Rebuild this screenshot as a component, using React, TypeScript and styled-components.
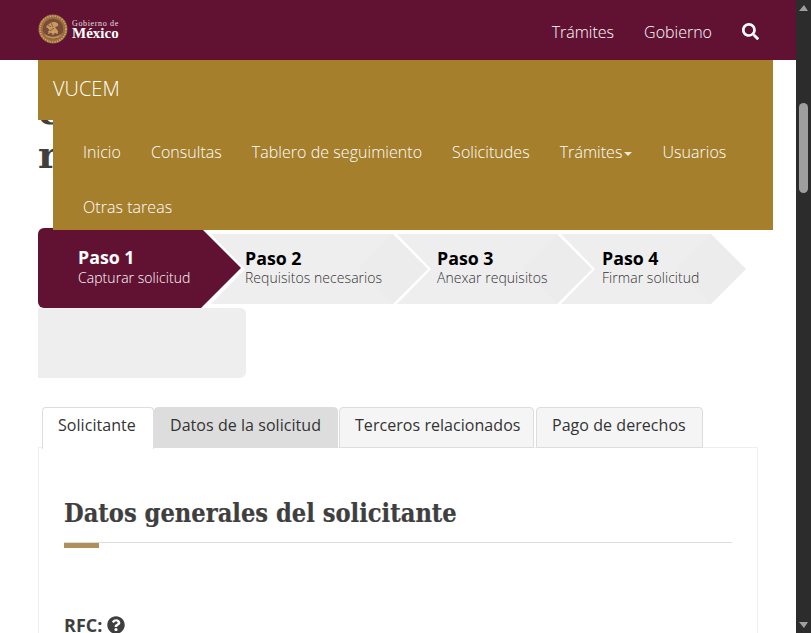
import React from "react";
import styled, { createGlobalStyle } from "styled-components";
import { FaSearch, FaQuestionCircle } from "react-icons/fa";

const Global = createGlobalStyle`
  html, body { margin: 0; padding: 0; background: #fff; overflow: hidden; }
  * { box-sizing: border-box; }
`;

const Shell = styled.div`
  display: flex;
  width: 811px;
  height: 633px;
  overflow: hidden;
  font-family: "Open Sans", "Noto Sans", sans-serif;
  color: #333;
`;
const Page = styled.div`
  width: 796px;
  flex: none;
  display: flex;
  flex-direction: column;
`;
const Scrollbar = styled.div`
  position: relative;
  flex: 1;
  background: #2c2c2c;
`;
const ScrollUp = styled.div`
  position: absolute;
  left: 3px;
  top: 5px;
  border-left: 5px solid transparent;
  border-right: 4px solid transparent;
  border-bottom: 6px solid #9e9e9e;
`;
const ScrollDown = styled.div`
  position: absolute;
  left: 3px;
  bottom: 5px;
  border-left: 5px solid transparent;
  border-right: 4px solid transparent;
  border-top: 6px solid #9e9e9e;
`;
const ScrollThumb = styled.div`
  position: absolute;
  left: 3px;
  top: 103px;
  width: 9px;
  height: 90px;
  border-radius: 5px;
  background: #9e9e9e;
`;

const TopBar = styled.header`
  height: 60px;
  flex: none;
  background: #611232;
  display: flex;
  align-items: center;
  padding: 0 37px 0 38px;
  color: #fff;
`;
const Logo = styled.div`
  display: flex;
  align-items: center;
  gap: 4px;
  margin-top: -2px;
`;
const LogoWords = styled.div`
  display: flex;
  flex-direction: column;
  font-family: "Liberation Serif", serif;
  color: #fff;
`;
const LogoSmall = styled.span`
  font-size: 8px;
  line-height: 8px;
  letter-spacing: 0.65px;
  opacity: 0.85;
`;
const LogoBig = styled.span`
  font-size: 15px;
  line-height: 10px;
  font-weight: 700;
`;
const TopLinks = styled.nav`
  margin-left: auto;
  display: flex;
  align-items: center;
`;
const TopLink = styled.a`
  font-size: 16px;
  line-height: 20px;
  margin-top: 4px;
  margin-right: 30px;
  color: #fff;
  font-weight: 300;
`;
const SearchIcon = styled(FaSearch)`
  width: 17px;
  height: 17px;
  margin-top: 2px;
  color: #fff;
`;

const Band = styled.div`
  position: relative;
  margin: 0 23px 0 38px;
  height: 170px;
  flex: none;
`;
const HiddenTitle = styled.h1`
  position: absolute;
  left: 0;
  top: 29px;
  margin: 0;
  font-family: "DejaVu Serif", serif;
  font-weight: 700;
  font-size: 38px;
  line-height: 44px;
  color: #3f3f3f;
`;
const Brand = styled.div`
  position: relative;
  height: 60px;
  background: #a57f2c;
  color: #fff;
  padding-left: 15px;
  font-size: 20px;
  font-weight: 300;
  line-height: 58px;
`;
const Menu = styled.ul`
  position: relative;
  z-index: 2;
  margin: 0 0 0 15px;
  padding: 5px 0 0 15px;
  height: 110px;
  list-style: none;
  background: #a57f2c;
  display: flex;
  flex-wrap: wrap;
  align-content: flex-start;
`;
const MenuItem = styled.li`
  padding: 0 15px;
  line-height: 55px;
  font-size: 16px;
  font-weight: 300;
  letter-spacing: 0.04px;
  color: #fff;
  display: flex;
  align-items: center;
`;
const Caret = styled.span`
  display: inline-block;
  margin-left: 2px;
  margin-top: 2px;
  border-top: 4px solid #f2ead8;
  border-left: 4px solid transparent;
  border-right: 4px solid transparent;
`;

const Steps = styled.ol`
  list-style: none;
  margin: -2px 0 0 38px;
  padding: 0;
  display: flex;
  align-items: center;
  height: 80px;
  flex: none;
`;
const Step = styled.li<{ $w: number; $ml: number; $pad: number; $active?: boolean }>`
  position: relative;
  flex: none;
  width: ${(p) => p.$w}px;
  height: ${(p) => (p.$active ? 80 : 70)}px;
  margin-left: ${(p) => p.$ml}px;
  margin-top: ${(p) => (p.$active ? 0 : 2)}px;
  padding: ${(p) => (p.$active ? "0 0 3px" : "0 0 4px")} ${(p) => p.$pad}px;
  display: flex;
  flex-direction: column;
  justify-content: center;
  background: ${(p) => (p.$active ? "#611232" : "#eeeeee")};
  color: ${(p) => (p.$active ? "#fff" : "#333")};
  border-radius: ${(p) => (p.$active ? "6px 0 0 6px" : "0")};
  z-index: ${(p) => (p.$active ? 1 : 0)};
  clip-path: ${(p) =>
    p.$active
      ? `polygon(0 0, ${p.$w - 40}px 0, ${p.$w}px 40px, ${p.$w - 40}px 80px, 0 80px)`
      : `polygon(0 0, ${p.$w - 35}px 0, ${p.$w}px 35px, ${p.$w - 35}px 70px, 0 70px, 34px 35px)`};
  &::after {
    content: "";
    display: ${(p) => (p.$active ? "none" : "block")};
    position: absolute;
    right: 0;
    top: 0;
    width: 70px;
    height: 70px;
    background: #ececec;
    clip-path: polygon(35px 0, 70px 35px, 35px 70px, 0 35px);
  }
`;
const StepTitle = styled.strong<{ $active?: boolean }>`
  position: relative;
  z-index: 1;
  font-size: 17.8px;
  line-height: 22px;
  font-weight: 700;
  color: ${(p) => (p.$active ? "#fff" : "#000")};
  margin-bottom: ${(p) => (p.$active ? 1 : 0)}px;
`;
const StepSub = styled.span`
  position: relative;
  z-index: 1;
  font-size: 14px;
  font-weight: 300;
  letter-spacing: 0.05px;
  line-height: 18px;
`;
const StepOverflow = styled.div`
  flex: none;
  width: 208px;
  height: 70px;
  margin-left: 38px;
  background: #eeeeee;
  border-radius: 0 6px 6px 0;
`;

const Tabs = styled.div`
  display: flex;
  flex: none;
  margin: 29px 0 0 42px;
  height: 41px;
`;
const Tab = styled.div<{ $w: number; $ml?: number; $state: "on" | "hover" | "off" }>`
  flex: none;
  position: relative;
  z-index: 1;
  width: ${(p) => p.$w}px;
  margin-left: ${(p) => p.$ml ?? 0}px;
  padding-left: 15px;
  font-size: 16px;
  letter-spacing: 0.05px;
  line-height: 34px;
  color: #333;
  border: 1px solid #ddd;
  border-bottom: ${(p) => (p.$state === "on" ? "none" : "1px solid #ddd")};
  border-radius: 4px 4px 0 0;
  height: ${(p) => (p.$state === "on" ? 42 : 41)}px;
  background: ${(p) =>
    p.$state === "on" ? "#fff" : p.$state === "hover" ? "#dddddd" : "#f5f5f5"};
`;
const Panel = styled.section`
  flex: 1;
  margin: -1px 38px 0 38px;
  padding: 0 25px;
  border: 1px solid #eee;
  border-bottom: none;
  width: 720px;
`;
const Heading = styled.h2`
  margin: 47px 0 0;
  font-family: "DejaVu Serif Condensed", "DejaVu Serif", serif;
  font-stretch: condensed;
  font-weight: 700;
  font-size: 25.2px;
  line-height: 36px;
  color: #3f3f3f;
  -webkit-text-stroke: 0.2px #3f3f3f;
`;
const Rule = styled.div`
  position: relative;
  height: 1px;
  margin-top: 11px;
  background: #ddd;
  &::after {
    content: "";
    position: absolute;
    left: 0;
    top: 1px;
    width: 35px;
    height: 5px;
    background: #b08f5c;
  }
`;
const Field = styled.div`
  margin-top: 72px;
  display: flex;
  align-items: center;
  gap: 5px;
  font-size: 18px;
  font-weight: 700;
  line-height: 20px;
  color: #3f3f3f;
`;

const Emblem = () => (
  <svg width="30" height="30" viewBox="0 0 30 30" aria-hidden="true">
    <circle cx="15" cy="15" r="14.5" fill="#9a6f3e" />
    <circle cx="15" cy="15" r="13" fill="none" stroke="#cfa56a" strokeWidth="1.6" strokeDasharray="1.4 1.1" />
    <circle cx="15" cy="15" r="10.3" fill="#7b4a3a" />
    <path d="M8 13c2-3 5-5 8-5 3 0 5 2 4 4l-3 1c1 2 3 3 3 5-3 2-6 2-9 0 1-2 0-3-3-5z" fill="#c79a5e" />
    <path d="M10 11l3 2M13 9l2 4M16 14l-4 3" stroke="#7b4a3a" strokeWidth="0.8" fill="none" />
    <path d="M11 20v-3M15 21v-4M19 20v-3" stroke="#d2a86c" strokeWidth="1.2" />
    <path d="M6 19c4 5 14 5 18 0l-1.5 3c-4 3.5-11 3.5-15 0z" fill="#bd9257" />
  </svg>
);

export default function App() {
  return (
    <Shell>
      <Global />
      <Page>
        <TopBar>
          <Logo>
            <Emblem />
            <LogoWords>
              <LogoSmall>Gobierno de</LogoSmall>
              <LogoBig>México</LogoBig>
            </LogoWords>
          </Logo>
          <TopLinks>
            <TopLink>Trámites</TopLink>
            <TopLink>Gobierno</TopLink>
            <SearchIcon />
          </TopLinks>
        </TopBar>
        <Band>
          <HiddenTitle>
            c
            <br />r
          </HiddenTitle>
          <Brand>VUCEM</Brand>
          <Menu>
            <MenuItem>Inicio</MenuItem>
            <MenuItem>Consultas</MenuItem>
            <MenuItem>Tablero de seguimiento</MenuItem>
            <MenuItem>Solicitudes</MenuItem>
            <MenuItem>
              Trámites
              <Caret />
            </MenuItem>
            <MenuItem>Usuarios</MenuItem>
            <MenuItem>Otras tareas</MenuItem>
          </Menu>
        </Band>
        <Steps>
          <Step $active $w={203} $ml={0} $pad={40}>
            <StepTitle $active>Paso 1</StepTitle>
            <StepSub>Capturar solicitud</StepSub>
          </Step>
          <Step $w={217} $ml={-30} $pad={34}>
            <StepTitle>Paso 2</StepTitle>
            <StepSub>Requisitos necesarios</StepSub>
          </Step>
          <Step $w={195} $ml={-31} $pad={40}>
            <StepTitle>Paso 3</StepTitle>
            <StepSub>Anexar requisitos</StepSub>
          </Step>
          <Step $w={185} $ml={-31} $pad={41}>
            <StepTitle>Paso 4</StepTitle>
            <StepSub>Firmar solicitud</StepSub>
          </Step>
        </Steps>
        <StepOverflow />
        <Tabs>
          <Tab $w={112} $state="on">Solicitante</Tab>
          <Tab $w={184} $state="hover">Datos de la solicitud</Tab>
          <Tab $w={195} $ml={1} $state="off">Terceros relacionados</Tab>
          <Tab $w={167} $ml={2} $state="off">Pago de derechos</Tab>
        </Tabs>
        <Panel>
          <Heading>Datos generales del solicitante</Heading>
          <Rule />
          <Field>
            RFC: <FaQuestionCircle size={18} />
          </Field>
        </Panel>
      </Page>
      <Scrollbar>
        <ScrollUp />
        <ScrollThumb />
        <ScrollDown />
      </Scrollbar>
    </Shell>
  );
}
